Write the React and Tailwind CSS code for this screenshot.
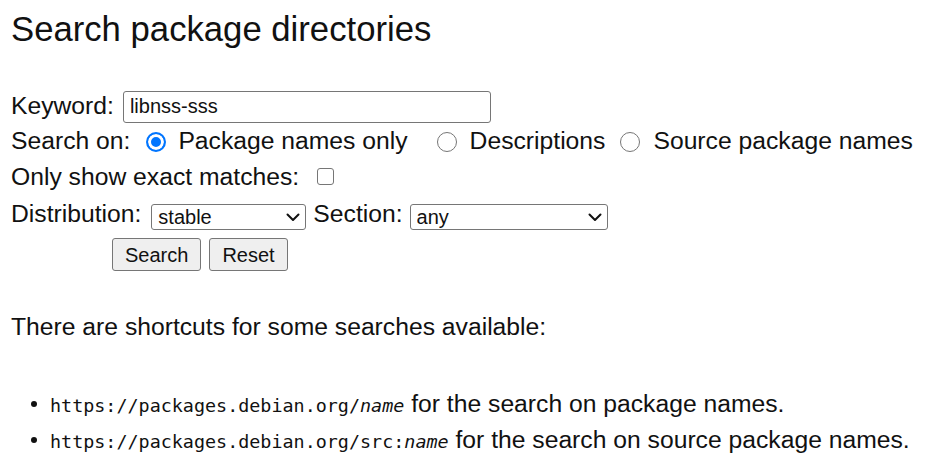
import React from 'react';

const sans = "font-['Liberation_Sans',Arial,sans-serif]";
const mono = "font-['DejaVu_Sans_Mono','Liberation_Mono',monospace]";

function Radio({ checked = false, name, className = '' }) {
  return (
    <input
      type="radio"
      name={name}
      defaultChecked={checked}
      className={`appearance-none w-[20px] h-[20px] rounded-full border border-[#767676] bg-white shrink-0 checked:border-2 checked:border-[#0075ff] checked:bg-[#0075ff] checked:shadow-[inset_0_0_0_3px_white] ${className}`}
    />
  );
}

function Chevron() {
  return (
    <svg width="14" height="9" viewBox="0 0 14 9" className="pointer-events-none absolute right-[6px] top-[9px]" aria-hidden="true">
      <path d="M1.5 1.5 L7 7 L12.5 1.5" fill="none" stroke="#111" strokeWidth="2" strokeLinecap="round" strokeLinejoin="round" />
    </svg>
  );
}

function Select({ value, options, width, className = '' }) {
  return (
    <span className={`relative flex h-[26px] ${className}`}>
      <select
        defaultValue={value}
        className={`appearance-none h-[26px] ${width} border border-[#767676] rounded-[3px] bg-white pl-[6px] text-[20px] leading-[24px] text-[#111] ${sans}`}
      >
        {options.map((o) => (
          <option key={o}>{o}</option>
        ))}
      </select>
      <Chevron />
    </span>
  );
}

function Button({ children }) {
  return (
    <button
      type="button"
      className={`h-[33px] px-[12px] border border-[#767676] rounded-[3px] bg-[#efefef] text-[20px] leading-[24px] text-[#111] ${sans}`}
    >
      {children}
    </button>
  );
}

export default function App() {
  return (
    <div className={`w-[938px] h-[467px] bg-white text-[#111] pl-[11px] ${sans} text-[24.7px] overflow-hidden`}>
      <h2 className="mt-[12px] text-[34.7px] leading-[35px] font-normal">Search package directories</h2>

      <form className="mt-[41px]">
        <div className="flex items-center h-[37px]">
          <span className="leading-none">Keyword:</span>
          <input
            type="text"
            defaultValue="libnss-sss"
            className={`ml-[9px] w-[368px] h-[32px] border border-[#767676] rounded-[3px] bg-white pl-[6px] text-[20px] text-[#111] ${sans}`}
          />
        </div>

        <div className="flex items-center h-[33px]">
          <span className="leading-none">Search on:</span>
          <Radio name="searchon" checked className="ml-[16px]" />
          <span className="leading-none ml-[12px]">Package names only</span>
          <Radio name="searchon" className="ml-[29px]" />
          <span className="leading-none ml-[13px]">Descriptions</span>
          <Radio name="searchon" className="ml-[15px]" />
          <span className="leading-none ml-[13px]">Source package names</span>
        </div>

        <div className="flex items-center h-[39px]">
          <span className="leading-none">Only show exact matches:</span>
          <input
            type="checkbox"
            className="appearance-none ml-[18px] mb-[3px] w-[17px] h-[17px] rounded-[3px] border border-[#767676] bg-white"
          />
        </div>

        <div className="flex items-center h-[35px]">
          <span className="leading-none">Distribution:</span>
          <Select value="stable" options={['stable', 'testing', 'unstable', 'oldstable']} width="w-[155px]" className="ml-[10px] mt-[5px]" />
          <span className="leading-none ml-[7px]">Section:</span>
          <Select value="any" options={['any', 'main', 'contrib', 'non-free']} width="w-[198px]" className="ml-[7px] mt-[5px]" />
        </div>

        <div className="flex items-center gap-[8px] h-[35px] mt-[5px] pl-[101px]">
          <Button>Search</Button>
          <Button>Reset</Button>
        </div>
      </form>

      <p className="mt-[41px] leading-[28px]">There are shortcuts for some searches available:</p>

      <ul className="mt-[45px]">
        <li className="flex items-center h-[36px]">
          <span className="ml-[20px] w-[6px] h-[6px] rounded-full bg-[#111] shrink-0" />
          <span className="ml-[13px] whitespace-nowrap">
            <code className={`${mono} text-[18.4px]`}>
              https://packages.debian.org/<em>name</em>
            </code>{' '}
            for the search on package names.
          </span>
        </li>
        <li className="flex items-center h-[36px]">
          <span className="ml-[20px] w-[6px] h-[6px] rounded-full bg-[#111] shrink-0" />
          <span className="ml-[13px] whitespace-nowrap">
            <code className={`${mono} text-[18.4px]`}>
              https://packages.debian.org/src:<em>name</em>
            </code>{' '}
            for the search on source package names.
          </span>
        </li>
      </ul>
    </div>
  );
}
